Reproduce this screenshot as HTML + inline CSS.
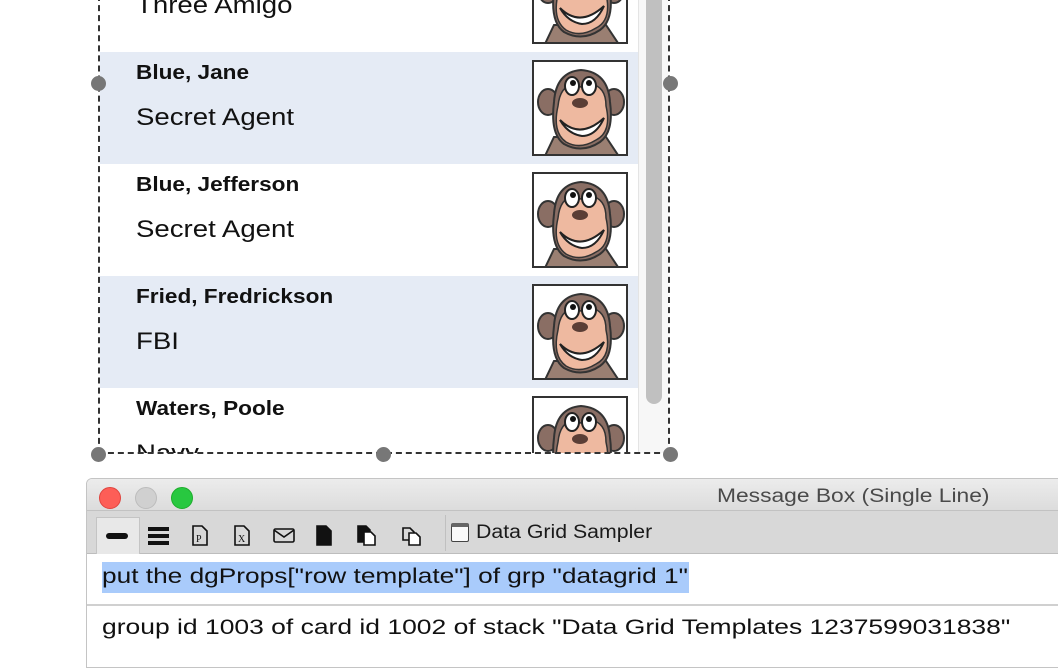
<!DOCTYPE html><html><head><style>
*{margin:0;padding:0;box-sizing:border-box}
body{width:1058px;height:660px;overflow:hidden;background:#fff;position:relative;font-family:"Liberation Sans",sans-serif;color:#111}
.a{position:absolute}
.s{transform-origin:0 0;white-space:nowrap}
.row{position:absolute;left:100px;width:538px;height:112px}
.b{background:#e5ebf5}
.nm{position:absolute;left:36px;top:10px;font-weight:bold;font-size:20px;transform:scaleX(1.13);transform-origin:0 0;white-space:nowrap}
.jb{position:absolute;left:36px;top:52px;font-size:24px;transform:scaleX(1.15);transform-origin:0 0;white-space:nowrap}
.pic{position:absolute;left:432px;top:8px;width:96px;height:96px;border:2px solid #333;background:#fff;overflow:hidden}
.h{position:absolute;width:15px;height:15px;border-radius:50%;background:#777;margin:-7px 0 0 -7px}
</style></head><body>
<svg width="0" height="0" style="position:absolute"><defs>
<g id="m">
<path d="M10 96 L20 75 L72 75 L86 96Z" fill="#9a7f72" stroke="#333" stroke-width="2"/>
<ellipse cx="14" cy="40" rx="10" ry="13" fill="#8a6e64" stroke="#333" stroke-width="2"/>
<ellipse cx="80" cy="40" rx="10" ry="13" fill="#8a6e64" stroke="#333" stroke-width="2"/>
<path d="M20 40 Q22 10 47 8 Q74 10 76 40 Q80 70 66 80 Q48 92 30 82 Q16 72 20 40Z" fill="#8a6e64" stroke="#333" stroke-width="2"/>
<path d="M24 44 Q26 24 40 22 Q48 28 56 22 Q72 24 72 44 Q78 70 62 78 Q46 88 32 80 Q18 70 24 44Z" fill="#eeb9a0" stroke="#333" stroke-width="1.5"/>
<ellipse cx="38" cy="24" rx="7" ry="9" fill="#fff" stroke="#222" stroke-width="2"/>
<ellipse cx="55" cy="24" rx="7" ry="9" fill="#fff" stroke="#222" stroke-width="2"/>
<circle cx="39" cy="21" r="3" fill="#111"/><circle cx="55" cy="21" r="3" fill="#111"/>
<ellipse cx="46" cy="41" rx="8" ry="5" fill="#5a3e36"/>
<path d="M26 58 Q46 78 70 56 Q62 74 48 74 Q34 72 26 58Z" fill="#fff" stroke="#222" stroke-width="2"/>
</g></defs></svg>

<div class="row" style="top:-60px"><div class="jb">Three Amigo</div><div class="pic"><svg width="92" height="92" viewBox="0 0 92 92"><use href="#m"/></svg></div></div>
<div class="row b" style="top:52px"><div class="nm">Blue, Jane</div><div class="jb">Secret Agent</div><div class="pic"><svg width="92" height="92" viewBox="0 0 92 92"><use href="#m"/></svg></div></div>
<div class="row" style="top:164px"><div class="nm">Blue, Jefferson</div><div class="jb">Secret Agent</div><div class="pic"><svg width="92" height="92" viewBox="0 0 92 92"><use href="#m"/></svg></div></div>
<div class="row b" style="top:276px"><div class="nm">Fried, Fredrickson</div><div class="jb">FBI</div><div class="pic"><svg width="92" height="92" viewBox="0 0 92 92"><use href="#m"/></svg></div></div>
<div class="row" style="top:388px;height:65px;overflow:hidden"><div class="nm">Waters, Poole</div><div class="jb">Navy</div><div class="pic"><svg width="92" height="92" viewBox="0 0 92 92"><use href="#m"/></svg></div></div>

<div class="a" style="left:638px;top:0;width:30px;height:453px;background:#f7f7f7;border-left:1px solid #e4e4e4"></div>
<div class="a" style="left:646px;top:-10px;width:16px;height:414px;background:#c0c0c0;border-radius:8px"></div>
<div class="a" style="left:98px;top:-5px;width:572px;height:459px;border:2px dashed #333"></div>
<div class="h" style="left:98px;top:83px"></div><div class="h" style="left:670px;top:83px"></div>
<div class="h" style="left:98px;top:454px"></div><div class="h" style="left:383px;top:454px"></div><div class="h" style="left:670px;top:454px"></div>

<div class="a" style="left:86px;top:478px;width:980px;height:190px;border:1px solid #c4c4c4;border-radius:6px 0 0 0;background:#fff;overflow:hidden">
<div class="a" style="left:0;top:0;width:100%;height:32px;background:linear-gradient(#ececec,#dcdcdc);border-bottom:1px solid #c2c2c2"></div>
<div class="a" style="left:12px;top:8px;width:22px;height:22px;border-radius:50%;background:#fd5e57;border:1px solid #e0443e"></div>
<div class="a" style="left:48px;top:8px;width:22px;height:22px;border-radius:50%;background:#d0d0d0;border:1px solid #bcbcbc"></div>
<div class="a" style="left:84px;top:8px;width:22px;height:22px;border-radius:50%;background:#28c840;border:1px solid #1dad2b"></div>
<div class="a s" style="left:630px;top:7px;font-size:19px;color:#4a4a4a;transform:scaleX(1.2)">Message Box (Single Line)</div>
<div class="a" style="left:0;top:32px;width:100%;height:43px;background:#d8d8d8;border-bottom:1px solid #bdbdbd"></div>
<div class="a" style="left:9px;top:38px;width:44px;height:37px;background:#e8e8e8;border:1px solid #c4c4c4;border-bottom:none"></div>
<div class="a" style="left:358px;top:36px;width:1px;height:36px;background:#c0c0c0"></div>
<div class="a" style="left:0;top:75px;width:100%;height:52px;background:#fff;border-bottom:2px solid #d0d0d0"></div>
</div>
<div class="a" style="left:106px;top:533px;width:22px;height:6px;background:#111;border-radius:3px"></div>
<div class="a" style="left:148px;top:527px;width:21px;height:4px;background:#111"></div>
<div class="a" style="left:148px;top:534px;width:21px;height:4px;background:#111"></div>
<div class="a" style="left:148px;top:541px;width:21px;height:4px;background:#111"></div>
<svg class="a" style="left:190px;top:523px" width="270" height="24" viewBox="0 0 270 24" fill="none" stroke="#111" stroke-width="1.6">
<path d="M3 3h9l5 5v14H3z"/><text x="6" y="19" font-size="10" font-family="Liberation Serif" fill="#111" stroke="none">P</text>
<path d="M45 3h9l5 5v14H45z"/><text x="48" y="19" font-size="10" font-family="Liberation Serif" fill="#111" stroke="none">X</text>
<rect x="84" y="6" width="20" height="13" rx="1.5"/><path d="M84 7l10 7 10-7"/>
<path d="M127 3h9l5 5v14h-14z" fill="#111"/>
<path d="M168 3h8l4 4v12h-12z" fill="#111"/><path d="M174 9h7l4 4v9h-11z" fill="#fff"/>
<path d="M213 5h7l4 4v8h-11z"/><path d="M219 10h7l4 4v8h-11z" fill="#fff"/>
</svg>
<div class="a" style="left:451px;top:523px;width:18px;height:19px;border:1px solid #444;border-top:4px solid #666;border-radius:2px;background:#fafafa"></div>
<div class="a s" style="left:476px;top:522px;font-size:19px;color:#1a1a1a;transform:scaleX(1.12)">Data Grid Sampler</div>
<div class="a" style="left:102px;top:562px;width:587px;height:31px;background:#a9cbfb"></div>
<div class="a s" style="left:102px;top:565px;font-size:21px;color:#111;transform:scaleX(1.25)">put the dgProps["row template"] of grp "datagrid 1"</div>
<div class="a s" style="left:102px;top:616px;font-size:21px;color:#111;transform:scaleX(1.26)">group id 1003 of card id 1002 of stack "Data Grid Templates 1237599031838"</div>
</body></html>
